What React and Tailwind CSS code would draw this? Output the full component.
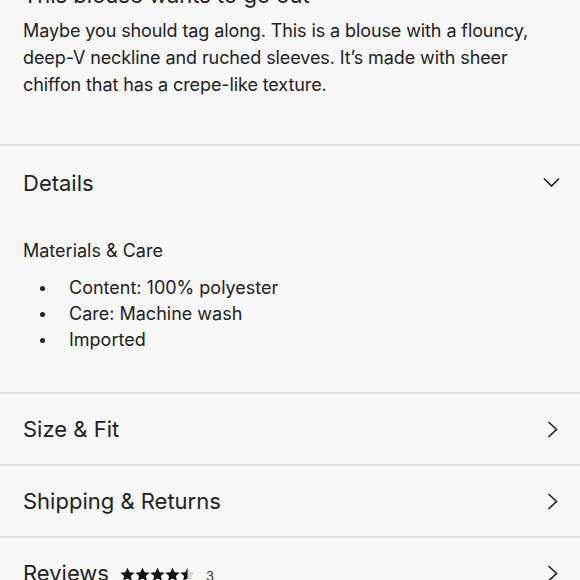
import React from "react"

const ChevronRight = () => (
  <svg width="11" height="17" viewBox="0 0 11 17" fill="none" className="shrink-0">
    <polyline points="1.5,1 9.5,8.5 1.5,16" stroke="#1e1e1e" strokeWidth="1.6" />
  </svg>
)

const ChevronDown = () => (
  <svg width="17" height="11" viewBox="0 0 17 11" fill="none" className="shrink-0">
    <polyline points="1,1.5 8.5,9 16,1.5" stroke="#1e1e1e" strokeWidth="1.6" />
  </svg>
)

const Star = ({ fill = 1 }) => (
  <svg width="15" height="15" viewBox="0 0 24 24" className="shrink-0">
    <defs>
      <clipPath id={`half-${fill}`}>
        <rect x="0" y="0" width={24 * fill} height="24" />
      </clipPath>
    </defs>
    <path d="M12 1l3.3 7.4 8.1.7-6.1 5.3 1.9 7.9L12 18.2 4.8 22.3l1.9-7.9L.6 9.1l8.1-.7z" fill="#d6d6d6" />
    <path
      d="M12 1l3.3 7.4 8.1.7-6.1 5.3 1.9 7.9L12 18.2 4.8 22.3l1.9-7.9L.6 9.1l8.1-.7z"
      fill="#111"
      clipPath={`url(#half-${fill})`}
    />
  </svg>
)

const Row = ({ children }) => (
  <div className="flex h-[72px] items-center justify-between border-t-2 border-[#e4e4e4] pl-[23px] pr-[22px]">
    {children}
  </div>
)

const bullets = ["Content: 100% polyester", "Care: Machine wash", "Imported"]

export default function App() {
  return (
    <div
      className="h-[580px] w-full overflow-hidden bg-[#f7f7f7] text-[#222]"
      style={{ fontFamily: "Inter, 'Noto Sans', sans-serif" }}
    >
      <section className="px-[23px] pb-[46px]">
        <h2 className="-mt-[19px] text-[22px] leading-[28px]">This blouse wants to go out</h2>
        <p className="mt-[8px] pr-[10px] text-[18px] leading-[27px] tracking-[-0.1px]">
          Maybe you should tag along. This is a blouse with a flouncy, deep-V neckline and ruched sleeves. It’s made with sheer chiffon that has a crepe-like texture.
        </p>
      </section>

      <div className="border-t-2 border-[#e4e4e4] pb-[39px]">
        <div className="flex h-[71px] items-center justify-between pl-[23px] pr-[20px] pt-[2px]">
          <span className="text-[22px] leading-[28px]">Details</span>
          <ChevronDown />
        </div>
        <div className="mt-[20px] px-[23px]">
          <p className="text-[18px] leading-[27px]">Materials &amp; Care</p>
          <ul className="mt-[11px]">
            {bullets.map((b) => (
              <li key={b} className="flex items-center text-[18px] leading-[26px]">
                <span className="ml-[17px] h-[5px] w-[5px] rounded-full bg-[#222]" />
                <span className="ml-[24px]">{b}</span>
              </li>
            ))}
          </ul>
        </div>
      </div>

      <Row>
        <span className="text-[22px] leading-[28px]">Size &amp; Fit</span>
        <ChevronRight />
      </Row>
      <Row>
        <span className="text-[22px] leading-[28px]">Shipping &amp; Returns</span>
        <ChevronRight />
      </Row>
      <Row>
        <div className="flex items-end gap-[11px]">
          <span className="text-[22px] leading-[28px]">Reviews</span>
          <div className="mb-[5px] flex items-center">
            <Star />
            <Star />
            <Star />
            <Star />
            <Star fill={0.5} />
          </div>
          <span className="mb-[3px] text-[13px] leading-[16px] text-[#333]">3</span>
        </div>
        <ChevronRight />
      </Row>
    </div>
  )
}
